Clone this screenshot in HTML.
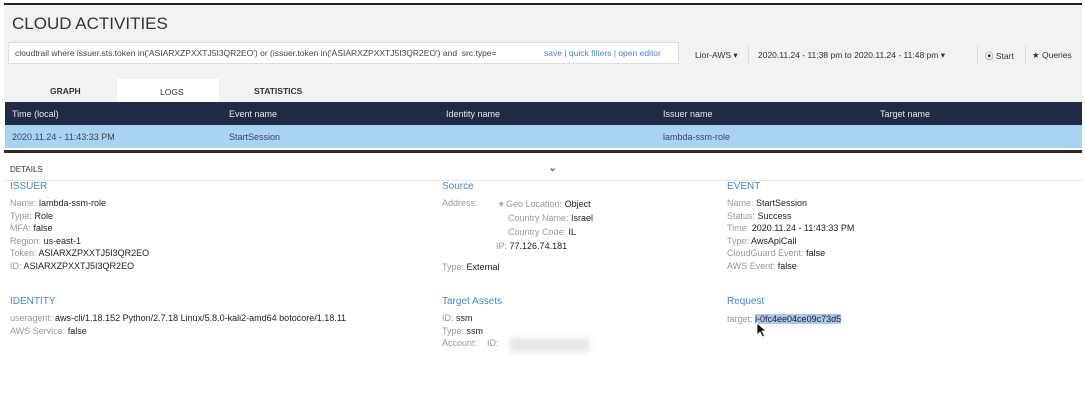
<!DOCTYPE html>
<html><head><style>
*{margin:0;padding:0;box-sizing:border-box}
body{width:1085px;height:412px;background:#fff;font-family:"Liberation Sans",sans-serif;position:relative;overflow:hidden;color:#333}
.a{position:absolute;white-space:nowrap}
.hdr{position:absolute;left:4px;top:3px;width:1078px;height:99px;background:#f2f2f2;border-top:2px solid #222}
.l{color:#999}
.b{color:#222}
.sec{color:#4a86c5;font-size:10px}
.f{font-size:9px;line-height:12.5px}
</style></head><body>
<div class="hdr"></div>
<div class="a" style="left:12px;top:14px;font-size:17px;color:#333">CLOUD ACTIVITIES</div>
<div class="a" style="left:8px;top:42px;width:671px;height:22px;background:#fff;border:1px solid #ddd"></div>
<div class="a" style="left:15px;top:48px;font-size:8.5px;color:#444">cloudtrail where issuer.sts.token in('ASIARXZPXXTJ5I3QR2EO') or (issuer.token in('ASIARXZPXXTJ5I3QR2EO') and &nbsp;src.type=</div>
<div class="a" style="left:544px;top:48px;font-size:8.5px;color:#4a86c5">save | quick filters | open editor</div>
<div class="a" style="left:695px;top:50px;font-size:8.5px;color:#333">Lior-AWS ▾</div>
<div class="a" style="left:748px;top:46px;width:1px;height:18px;background:#ddd"></div>
<div class="a" style="left:758px;top:50px;font-size:8.5px;color:#333">2020.11.24 - 11:38 pm to 2020.11.24 - 11:48 pm ▾</div>
<div class="a" style="left:977px;top:46px;width:1px;height:18px;background:#ddd"></div>
<div class="a" style="left:985px;top:50px;font-size:8.5px;color:#333">⦿ Start</div>
<div class="a" style="left:1025px;top:46px;width:1px;height:18px;background:#ddd"></div>
<div class="a" style="left:1032px;top:50px;font-size:8.5px;color:#333">★ Queries</div>
<div class="a" style="left:117px;top:79px;width:102px;height:24px;background:#fff"></div>
<div class="a" style="left:50px;top:86px;font-size:8.5px;font-weight:bold;color:#333">GRAPH</div>
<div class="a" style="left:160px;top:87px;font-size:8.5px;color:#333">LOGS</div>
<div class="a" style="left:254px;top:86px;font-size:8.5px;font-weight:bold;color:#333">STATISTICS</div>
<div class="a" style="left:5px;top:102px;width:1077px;height:23px;background:#1f2a44"></div>
<div class="a" style="left:5px;top:125px;width:1077px;height:23px;background:#a9d3f2"></div>
<div class="a" style="left:4px;top:150px;width:1078px;height:3px;background:#2a2a2a"></div>
<div class="a" style="left:12px;top:109px;font-size:9px;color:#e4e8ef">Time (local)</div>
<div class="a" style="left:229px;top:109px;font-size:9px;color:#e4e8ef">Event name</div>
<div class="a" style="left:446px;top:109px;font-size:9px;color:#e4e8ef">Identity name</div>
<div class="a" style="left:663px;top:109px;font-size:9px;color:#e4e8ef">Issuer name</div>
<div class="a" style="left:880px;top:109px;font-size:9px;color:#e4e8ef">Target name</div>
<div class="a" style="left:12px;top:132px;font-size:9px;color:#445">2020.11.24 - 11:43:33 PM</div>
<div class="a" style="left:229px;top:132px;font-size:9px;color:#445">StartSession</div>
<div class="a" style="left:663px;top:132px;font-size:9px;color:#445">lambda-ssm-role</div>
<div class="a" style="left:10px;top:165px;font-size:8px;color:#333">DETAILS</div>
<div class="a" style="left:548px;top:161px;font-size:11px;color:#333">⌄</div>
<div class="a" style="left:4px;top:180px;width:1078px;height:1px;background:#e4e4e4"></div>
<div class="a sec" style="left:10px;top:181px">ISSUER</div>
<div class="a f" style="left:10px;top:197px"><span class="l">Name:</span> <span class="b">lambda-ssm-role</span><br><span class="l">Type:</span> <span class="b">Role</span><br><span class="l">MFA:</span> <span class="b">false</span><br><span class="l">Region:</span> <span class="b">us-east-1</span><br><span class="l">Token:</span> <span class="b">ASIARXZPXXTJ5I3QR2EO</span><br><span class="l">ID:</span> <span class="b">ASIARXZPXXTJ5I3QR2EO</span></div>
<div class="a sec" style="left:10px;top:296px">IDENTITY</div>
<div class="a f" style="left:10px;top:312px"><span class="l">useragent:</span> <span class="b">aws-cli/1.18.152 Python/2.7.18 Linux/5.8.0-kali2-amd64 botocore/1.18.11</span><br><span class="l">AWS Service:</span> <span class="b">false</span></div>
<div class="a sec" style="left:442px;top:181px">Source</div>
<div class="a f l" style="left:442px;top:197px">Address:</div>
<div class="a f" style="left:499px;top:197px;line-height:14px"><span class="l">▾ Geo Location:</span> <span class="b">Object</span></div>
<div class="a f" style="left:508px;top:211px;line-height:14px"><span class="l">Country Name:</span> <span class="b">Israel</span><br><span class="l">Country Code:</span> <span class="b">IL</span></div>
<div class="a f" style="left:496px;top:239px;line-height:14px"><span class="l">IP:</span> <span class="b">77.126.74.181</span></div>
<div class="a f" style="left:442px;top:261px"><span class="l">Type:</span> <span class="b">External</span></div>
<div class="a sec" style="left:442px;top:296px">Target Assets</div>
<div class="a f" style="left:442px;top:312px"><span class="l">ID:</span> <span class="b">ssm</span><br><span class="l">Type:</span> <span class="b">ssm</span><br><span class="l">Account:</span> &nbsp;&nbsp;&nbsp;<span class="l">ID:</span></div>
<div class="a" style="left:510px;top:338px;width:80px;height:14px;background:#e6e6e6;filter:blur(3px)"></div>
<div class="a sec" style="left:727px;top:181px">EVENT</div>
<div class="a f" style="left:727px;top:197px"><span class="l">Name:</span> <span class="b">StartSession</span><br><span class="l">Status:</span> <span class="b">Success</span><br><span class="l">Time:</span> <span class="b">2020.11.24 - 11:43:33 PM</span><br><span class="l">Type:</span> <span class="b">AwsApiCall</span><br><span class="l">CloudGuard Event:</span> <span class="b">false</span><br><span class="l">AWS Event:</span> <span class="b">false</span></div>
<div class="a sec" style="left:727px;top:296px">Request</div>
<div class="a f" style="left:727px;top:313px"><span class="l">target:</span> <span class="b" style="background:#a9c8ec">i-0fc4ee04ce09c73d5</span></div>
<svg class="a" style="left:756px;top:322px" width="12" height="16" viewBox="0 0 12 16"><path d="M1 1 L1 13 L4 10 L6.5 15 L8.5 14 L6 9 L10 9 Z" fill="#111" stroke="#fff" stroke-width="0.8"/></svg>
</body></html>
